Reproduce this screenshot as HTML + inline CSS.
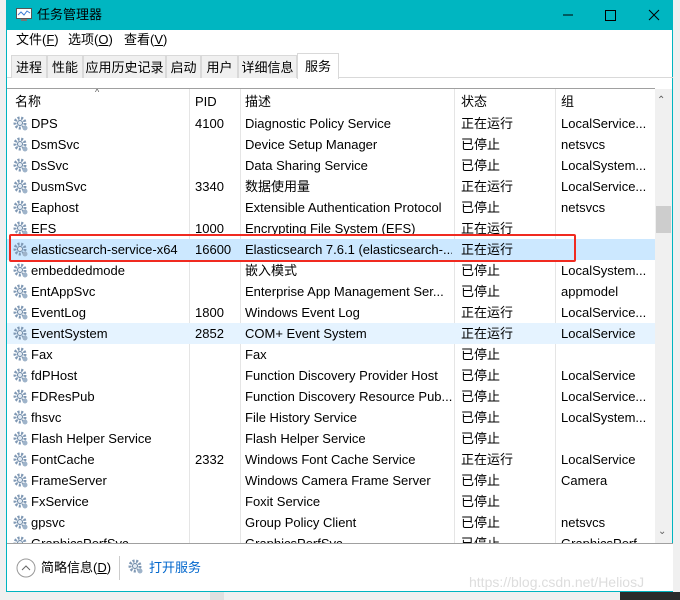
<!DOCTYPE html>
<html><head><meta charset="utf-8"><style>
*{margin:0;padding:0;box-sizing:border-box}
body{width:680px;height:600px;background:#f0f0f0;position:relative;overflow:hidden;font-family:"Liberation Sans","Noto Sans CJK SC",sans-serif;font-size:13px;color:#000;line-height:16px}
.win{position:absolute;left:6px;top:0;width:667px;height:592px;background:#fff;border:1px solid #00b4c0;border-top:none}
.title{position:absolute;left:0;top:0;width:666px;height:30px;background:#00b6c1;color:#000;font-size:13px}
.title .t{position:absolute;left:30px;top:7px}
.menu{position:absolute;top:32px;left:0;font-size:13px}
.menu span{position:absolute;white-space:nowrap}
.tabs{position:absolute;top:53px;left:0;height:25px;width:666px;border-bottom:1px solid #d9d9d9}
.tab{position:absolute;top:2px;height:23px;background:#f0f0f0;border:1px solid #d9d9d9;border-bottom:none;padding-top:4px;text-align:center;font-size:13px;white-space:nowrap}
.tab.sel{background:#fff;top:0;height:26px;padding-top:5px}
.hdr{position:absolute;top:88px;left:0;width:648px;height:25px;border-top:1px solid #a0a0a0}
.hdr div,.row div{position:absolute;top:3px;white-space:nowrap;overflow:hidden;line-height:16px}
.hdr div{top:5px}
.row{position:absolute;left:0;width:648px;height:21px}
.vl{position:absolute;top:89px;width:1px;height:455px;background:#e5e5e5}
.gear{position:absolute;left:6px;top:3px;width:16px;height:16px}
.sb{position:absolute;left:648px;top:89px;width:17px;height:455px;background:#f0f0f0}
.foot{position:absolute;left:0;top:543px;width:666px;height:48px;border-top:1px solid #a0a0a0;background:#fff}
</style></head><body>
<div class="win">
<div class="title"><svg style="position:absolute;left:9px;top:8px" width="16" height="14"><rect x="0.5" y="0.5" width="15" height="10" fill="#fff" stroke="#555"/><polyline points="2,7 5,4 8,7 11,3 14,5" fill="none" stroke="#3a7bd5"/><rect x="5" y="11" width="6" height="2" fill="#777"/></svg><span class="t">任务管理器</span>
<svg style="position:absolute;left:552px;top:8px" width="110" height="14"><line x1="4" y1="7" x2="14" y2="7" stroke="#000"/><rect x="46.5" y="2.5" width="10" height="10" fill="none" stroke="#000"/><path d="M90 2L100 12M100 2L90 12" stroke="#000"/></svg></div>
<div class="menu"><span style="left:9px">文件(<u>F</u>)</span><span style="left:61px">选项(<u>O</u>)</span><span style="left:117px">查看(<u>V</u>)</span></div>
<div class="tabs">
<div class="tab" style="left:4px;width:36px">进程</div><div class="tab" style="left:40px;width:36px">性能</div><div class="tab" style="left:76px;width:83px">应用历史记录</div><div class="tab" style="left:159px;width:35px">启动</div><div class="tab" style="left:194px;width:37px">用户</div><div class="tab" style="left:231px;width:59px">详细信息</div><div class="tab sel" style="left:290px;width:42px">服务</div>
</div>
<div style="position:absolute;left:88px;top:84px;font-size:9px;color:#555">^</div>
<div class="hdr"><div style="left:8px">名称</div><div style="left:188px">PID</div><div style="left:238px">描述</div><div style="left:454px">状态</div><div style="left:554px">组</div></div>
<div class="vl" style="left:182px"></div><div class="vl" style="left:233px"></div><div class="vl" style="left:447px"></div><div class="vl" style="left:548px"></div>
<div id="rows"></div>
<div class="sb"><div style="position:absolute;left:2px;top:4px;font-size:10px;color:#606060">&#8963;</div><div style="position:absolute;left:1px;top:117px;width:15px;height:27px;background:#cdcdcd"></div><div style="position:absolute;left:3px;top:435px;font-size:10px;color:#606060">&#8964;</div></div>
<div class="foot">
<svg style="position:absolute;left:9px;top:14px" width="20" height="20"><circle cx="10" cy="10" r="9" fill="none" stroke="#999"/><polyline points="6,12 10,8 14,12" fill="none" stroke="#666"/></svg>
<div style="position:absolute;left:34px;top:16px">简略信息(<u>D</u>)</div>
<div style="position:absolute;left:112px;top:12px;width:1px;height:24px;background:#ccc"></div>
<svg style="position:absolute;left:121px;top:15px" width="16" height="16" viewBox="0 0 16 16"><circle cx="7" cy="7" r="5" fill="none" stroke="#7f98b4" stroke-width="3" stroke-dasharray="2 1.5"/><circle cx="7" cy="7" r="2.5" fill="#e3ebf3" stroke="#6a86a4"/><circle cx="12" cy="12" r="2.5" fill="#9fb4ca"/></svg>
<div style="position:absolute;left:142px;top:16px;color:#0066cc">打开服务</div>
<div style="position:absolute;left:462px;top:30px;color:#ddd;font-size:14px">https://blog.csdn.net/HeliosJ</div>
</div>
</div>
<div style="position:absolute;left:210px;top:592px;width:14px;height:8px;background:#e0e0e0"></div>
<div style="position:absolute;left:620px;top:592px;width:60px;height:8px;background:#2a2a2a"></div>
<div style="position:absolute;left:9px;top:234px;width:567px;height:28px;border:2px solid #f02a20;border-radius:2px"></div>
<script>
var d=[["DPS","4100","Diagnostic Policy Service","正在运行","LocalService..."],["DsmSvc","","Device Setup Manager","已停止","netsvcs"],["DsSvc","","Data Sharing Service","已停止","LocalSystem..."],["DusmSvc","3340","数据使用量","正在运行","LocalService..."],["Eaphost","","Extensible Authentication Protocol","已停止","netsvcs"],["EFS","1000","Encrypting File System (EFS)","正在运行",""],["elasticsearch-service-x64","16600","Elasticsearch 7.6.1 (elasticsearch-...","正在运行",""],["embeddedmode","","嵌入模式","已停止","LocalSystem..."],["EntAppSvc","","Enterprise App Management Ser...","已停止","appmodel"],["EventLog","1800","Windows Event Log","正在运行","LocalService..."],["EventSystem","2852","COM+ Event System","正在运行","LocalService"],["Fax","","Fax","已停止",""],["fdPHost","","Function Discovery Provider Host","已停止","LocalService"],["FDResPub","","Function Discovery Resource Pub...","已停止","LocalService..."],["fhsvc","","File History Service","已停止","LocalSystem..."],["Flash Helper Service","","Flash Helper Service","已停止",""],["FontCache","2332","Windows Font Cache Service","正在运行","LocalService"],["FrameServer","","Windows Camera Frame Server","已停止","Camera"],["FxService","","Foxit Service","已停止",""],["gpsvc","","Group Policy Client","已停止","netsvcs"],["GraphicsPerfSvc","","GraphicsPerfSvc","已停止","GraphicsPerf..."]];
var g='<svg class="gear" viewBox="0 0 16 16"><circle cx="7" cy="7" r="5" fill="none" stroke="#7f98b4" stroke-width="3" stroke-dasharray="2 1.5"/><circle cx="7" cy="7" r="2.5" fill="#e3ebf3" stroke="#6a86a4"/><circle cx="12" cy="12" r="2.5" fill="#9fb4ca"/></svg>';
var h='',c=document.getElementById('rows');
d.forEach(function(r,i){var t=113+21*i;var bg=i==6?'#cce8ff':(i==10?'#e5f3ff':'transparent');
h+='<div class="row" style="top:'+t+'px;height:'+Math.min(21,543-t)+'px;overflow:hidden;background:'+bg+'">'+g+'<div style="left:24px;width:155px">'+r[0]+'</div><div style="left:188px">'+r[1]+'</div><div style="left:238px;width:207px">'+r[2]+'</div><div style="left:454px">'+r[3]+'</div><div style="left:554px;width:92px">'+r[4]+'</div></div>';});
c.innerHTML=h;
</script>
</body></html>
